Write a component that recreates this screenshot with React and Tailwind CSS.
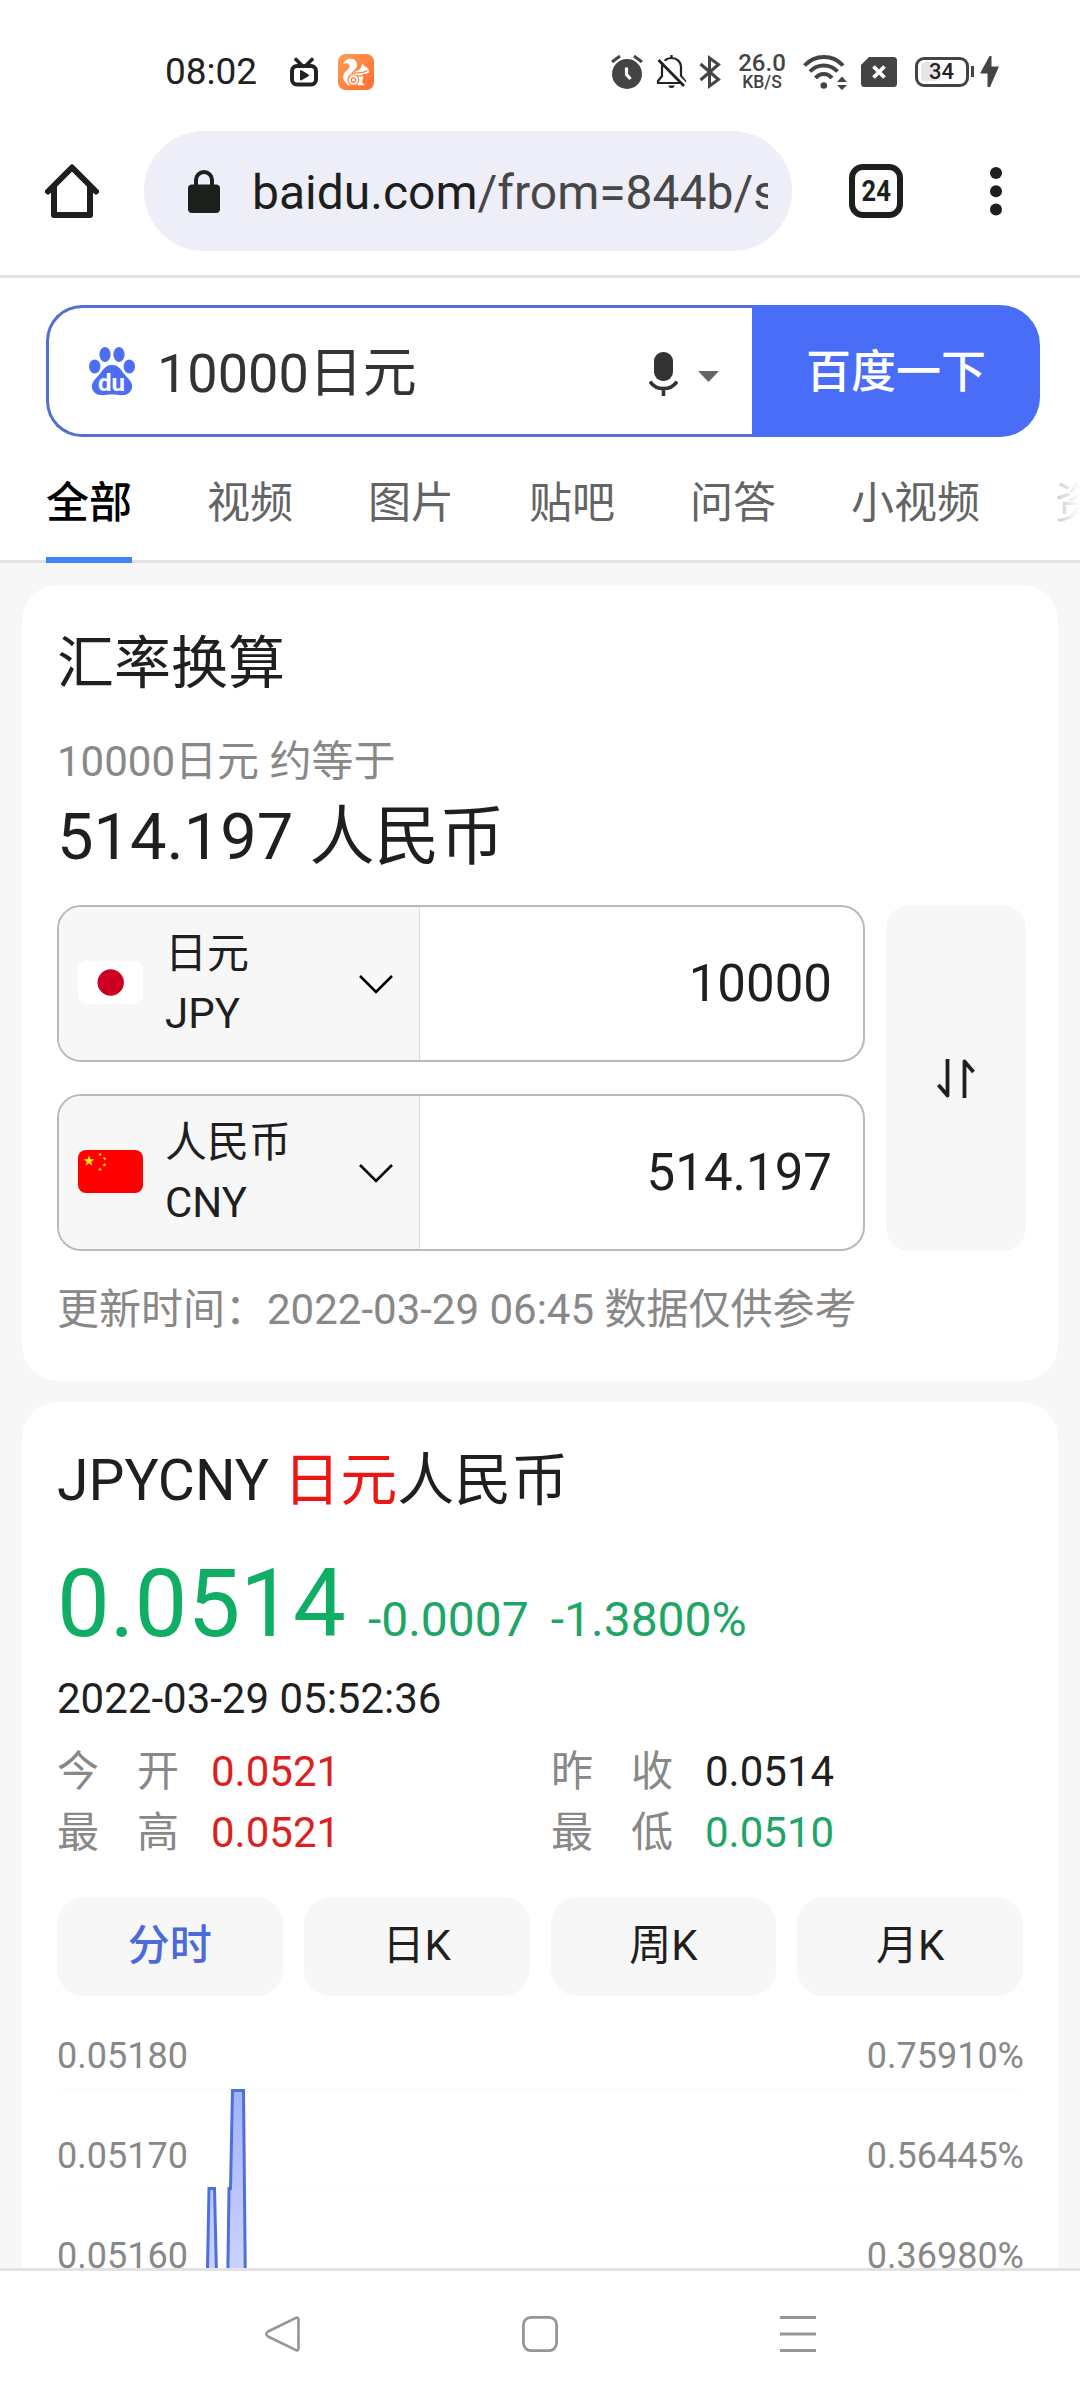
import React, { useState } from "react";

const tabs = ["视频", "图片", "贴吧", "问答", "小视频", "资讯"];

const stats = [
  { label: ["今", "开"], value: "0.0521", color: "text-[#dd1f1f]" },
  { label: ["昨", "收"], value: "0.0514", color: "text-[#1f1f1f]" },
  { label: ["最", "高"], value: "0.0521", color: "text-[#dd1f1f]" },
  { label: ["最", "低"], value: "0.0510", color: "text-[#1fa667]" },
];

const periods = ["分时", "日K", "周K", "月K"];

const axis = [
  ["0.05180", "0.75910%"],
  ["0.05170", "0.56445%"],
  ["0.05160", "0.36980%"],
];

const StatusBar = () => (
  <div className="flex h-[131px] items-center pt-[12px] pl-[165px] pr-[81px] text-[#444]">
    <span className="w-[125px] text-[37px] leading-[40px] text-[#222]">08:02</span>
    {/* tv */}
    <svg className="w-[28px] h-[30px]" viewBox="0 0 28 30" fill="none" stroke="#222" strokeWidth="4">
      <rect x="2" y="9" width="24" height="18.500" rx="5" />
      <path d="M6 2.500l6 6M22 2.500l-6 6" strokeLinecap="round" strokeWidth="3.600" />
      <path d="M11 14v8.500l7-4.200z" fill="#222" strokeWidth="2" strokeLinejoin="round" />
    </svg>
    {/* squirrel */}
    <svg className="ml-[20px] w-[36px] h-[36px]" viewBox="0 0 105 105">
      <defs>
        <linearGradient id="uc" x1="0" y1="0" x2="1" y2="1">
          <stop offset="0" stopColor="#ff9f52" />
          <stop offset="1" stopColor="#ff6a30" />
        </linearGradient>
      </defs>
      <rect width="105" height="105" rx="22" fill="url(#uc)" />
      <path d="M15 30C20 12 46 8 54 24C60 38 50 46 40 54C30 62 25 72 28 88C14 80 11 64 22 51C30 43 36 38 33 31C28 26 22 26 15 30Z" fill="#fff" />
      <path d="M71 27L77 36C86 39 92 47 90 54C86 59 79 58 72 59C76 67 70 77 71 85L77 88V91H27C23 76 32 60 46 53C56 48 62 48 66 41C68 36 70 33 71 27Z" fill="#fff" />
      <circle cx="45" cy="76" r="15.500" fill="none" stroke="#ff8040" strokeWidth="3.500" />
      <circle cx="45" cy="76" r="6.500" fill="none" stroke="#ff8040" strokeWidth="4" />
      <path d="M40 57C54 52 66 60 86 48M56 62C64 67 70 65 76 60" fill="none" stroke="#ff8040" strokeWidth="3.500" />
    </svg>

    {/* alarm */}
    <svg className="ml-auto w-[32px] h-[34px]" viewBox="0 0 32 34">
      <circle cx="16" cy="19" r="15" fill="#444" />
      <path d="M1 7l8-6M31 7l-8-6" stroke="#444" strokeWidth="3" />
      <path d="M15.500 12.500v7l4 4.500" stroke="#fff" strokeWidth="3.200" fill="none" />
    </svg>
    {/* muted bell */}
    <svg className="ml-[13px] w-[31px] h-[33px]" viewBox="0 0 31 33" fill="none" stroke="#222" strokeWidth="2.200">
      <path d="M2 28h27v-2l-4-5v-9c0-5-4-9-9.500-9S6 7 6 12v9l-4 5z" />
      <path d="M15.500 0v3" />
      <path d="M12.500 30.500a3 2.500 0 0 0 6 0z" fill="#222" stroke="none" />
      <path d="M4.500 3.500L29.500 29" stroke="#fff" strokeWidth="3" />
      <path d="M2.500 5L28 31" strokeWidth="2.800" />
    </svg>
    {/* bluetooth */}
    <svg className="ml-[12px] w-[22px] h-[34px]" viewBox="0 0 22 34" fill="none" stroke="#444" strokeWidth="3">
      <path d="M1.500 9L19.500 24.500L10.500 31V3L19.500 9.500L1.500 25" />
    </svg>
    <div className="ml-[16px] w-[50px] text-center font-medium">
      <div className="text-[24px] leading-[20px]">26.0</div>
      <div className="text-[17.500px] leading-[18px]">KB/S</div>
    </div>
    {/* wifi */}
    <svg className="ml-[16px] w-[45px] h-[36px]" viewBox="0 0 45 36" fill="none" stroke="#444" strokeWidth="4">
      <path d="M1.500 11.500C12 0 30 0 40 11.500" />
      <path d="M7 17.500C14.500 9.500 27 9.500 34.500 17.500" />
      <path d="M12.500 24C17 18.500 24.500 18.500 29 24" />
      <circle cx="20.800" cy="31.500" r="3.300" fill="#444" stroke="none" />
      <path d="M34 28l5-5.500 5 5.500zM34 31l5 5 5-5z" fill="#444" stroke="none" />
    </svg>
    {/* sim */}
    <svg className="ml-[13px] w-[36px] h-[30px]" viewBox="0 0 36 30">
      <path d="M8 0h24.500a3.500 3.500 0 0 1 3.500 3.500v23a3.500 3.500 0 0 1-3.500 3.500h-29A3.500 3.500 0 0 1 0 26.500V8z" fill="#444" />
      <path d="M12.500 9.500l11 11M23.500 9.500l-11 11" stroke="#fff" strokeWidth="3.800" />
    </svg>
    {/* battery */}
    <div className="ml-[18px] flex h-[30px] w-[54px] items-center rounded-[9px] border-[3px] border-[#444] p-[3px]">
      <div className="flex h-[19px] w-[16px] rounded-l-[4px] bg-[#e8e4e8] pl-[8px]">
        <span className="text-[22px] leading-[20px] font-medium text-[#222]">34</span>
      </div>
    </div>
    <div className="ml-[2px] h-[11px] w-[3px] bg-[#444]" />
    <svg className="ml-[6px] w-[19px] h-[31px]" viewBox="0 0 19 31">
      <path d="M9.500 0L0 17.500h7.500V31h2.500L19 10.500h-7.500V0z" fill="#444" />
    </svg>
  </div>
);

const BrowserBar = () => (
  <div className="flex h-[147px] border-b-[3px] border-[#e3e3e3] pl-[45px]">
    <svg className="mt-[33px] w-[54px] h-[54px]" viewBox="0 0 54 54" fill="none" stroke="#1d1f1d" strokeWidth="6" strokeLinecap="round" strokeLinejoin="round">
      <path d="M3 27.500L27 3.500L51 27.500" />
      <path d="M9 23v28h36V23" />
    </svg>
    <div className="ml-[45px] flex h-[120px] w-[648px] items-center rounded-full bg-[#eeeef8] pl-[44px] pr-[24px]">
      <svg className="w-[32px] h-[43px]" viewBox="0 0 32 43">
        <rect y="14.500" width="32" height="28.500" rx="4" fill="#1d1f1d" />
        <path d="M8 17v-7a8 8 0 0 1 16 0v7" fill="none" stroke="#1d1f1d" strokeWidth="4" />
      </svg>
      <div className="ml-[32px] flex-1 overflow-hidden whitespace-nowrap pt-[3px] text-[48px] leading-[64px] text-[#474747]">
        <span className="text-[#1d1f1d]">baidu.com</span>/from=844b/s
      </div>
    </div>
    <div className="ml-[57px] mt-[33px] flex h-[54px] w-[54px] items-center justify-center rounded-[14px] border-[6px] border-[#1d1f1d]">
      <span className="scale-x-[0.85] text-[30px] font-bold leading-[40px] text-[#1d1f1d]">24</span>
    </div>
    <svg className="ml-[87px] mt-[36px] w-[12px] h-[49px]" viewBox="0 0 12 49" fill="#1d1f1d">
      <circle cx="6" cy="6" r="6" />
      <circle cx="6" cy="24.200" r="6" />
      <circle cx="6" cy="42.500" r="6" />
    </svg>
  </div>
);

const SearchBox = () => (
  <div className="mr-[40px] ml-[46px] mt-[27px] flex h-[132px]">
    <div className="flex flex-1 items-center rounded-l-[36px] border-[3px] border-r-0 border-[#5470cf] pl-[40px] pr-[33px]">
      <svg className="w-[46px] h-[49px]" viewBox="0 0 46 49" fill="#4b6ef5">
        <ellipse cx="16" cy="7.500" rx="5.600" ry="7.500" />
        <ellipse cx="30" cy="7.500" rx="5.600" ry="7.500" />
        <ellipse cx="5.700" cy="19.500" rx="5.700" ry="7" />
        <ellipse cx="40.300" cy="19.500" rx="5.700" ry="7" />
        <path d="M23 18C31 18 32 24 37 29C42 34 45 38 42 43.500C38 50.500 30 47.500 23 47.500C16 47.500 8 50.500 4 43.500C1 38 4 34 9 29C14 24 15 18 23 18Z" />
        <text x="22.500" y="44" fill="#fff" fontSize="24" fontWeight="700" textAnchor="middle" textLength="27" lengthAdjust="spacingAndGlyphs">du</text>
      </svg>
      <div className="ml-[22px] text-[54px] leading-[80px] pt-[5px] text-[#333]">10000日元</div>
      <svg className="ml-auto mt-[6px] w-[29px] h-[44px]" viewBox="0 0 29 44">
        <rect x="5" width="19" height="29" rx="9" fill="#333" />
        <path d="M1 29.500C7 39 22 39 28 29.500M14.500 36v8" fill="none" stroke="#333" strokeWidth="3.600" />
      </svg>
      <svg className="ml-[20px] mt-[10px] w-[21px] h-[11px]" viewBox="0 0 21 11">
        <path d="M0 0h21L10.500 11z" fill="#666" />
      </svg>
    </div>
    <button className="w-[288px] rounded-r-[40px] bg-[#4a6df7] pt-[4px] text-[45px] font-medium leading-[60px] text-white">百度一下</button>
  </div>
);

const Tabs = () => (
  <div className="relative flex h-[126px] gap-[75px] whitespace-nowrap border-b-[3px] border-[#e4e4e4] pl-[46px] text-[43px] leading-[60px] text-[#646464]">
    <div className="-mb-[3px] h-[126px] shrink-0 border-b-[6px] border-[#3b87f2] pt-[36px] font-medium text-black">全部</div>
    {tabs.map((tab) => (
      <div key={tab} className="shrink-0 pt-[36px]">{tab}</div>
    ))}
    <div className="absolute right-0 top-0 h-[120px] w-[50px] bg-gradient-to-r from-white/30 to-white" />
  </div>
);

const JapanFlag = () => (
  <svg className="mb-[2px] w-[65px] h-[43px]" viewBox="0 0 65 43">
    <rect width="65" height="43" rx="8" fill="#fff" />
    <circle cx="32.700" cy="21.500" r="13.200" fill="#cc0022" />
  </svg>
);

const Star = ({ x, y, r, turn = 0 }) => (
  <path
    d="M0-10L2.250-3.090H9.510L3.630 1.180L5.880 8.090L0 3.820L-5.880 8.090L-3.630 1.180L-9.510-3.090H-2.250Z"
    transform={`translate(${x} ${y}) rotate(${turn}) scale(${r / 10})`}
    fill="#ffee00"
  />
);

const ChinaFlag = () => (
  <svg className="mb-[2px] w-[65px] h-[43px]" viewBox="0 0 65 43">
    <rect width="65" height="43" rx="8" fill="#fe0000" />
    <Star x={11} y={11} r={5.800} />
    <Star x={22} y={4.500} r={2.200} turn={25} />
    <Star x={26.500} y={8.500} r={2.200} turn={45} />
    <Star x={26.500} y={15} r={2.200} />
    <Star x={22} y={19.500} r={2.200} turn={20} />
  </svg>
);

const CurrencyRow = ({ flag, name, code, amount }) => (
  <div className="flex h-[157px] overflow-hidden rounded-[24px] border-2 border-[#b9b9b9]">
    <div className="flex w-[361px] items-center border-r border-[#dcdcdc] bg-[#f7f7f7] pl-[19px] pr-[26px]">
      {flag}
      <div className="ml-[22px] text-[42px] leading-[60px] text-[#1f1f1f]">
        <div>{name}</div>
        <div>{code}</div>
      </div>
      <svg className="ml-auto mt-[2px] w-[34px] h-[19px]" viewBox="0 0 34 19">
        <path d="M1 1L17 17L33 1" fill="none" stroke="#000" strokeWidth="2.600" />
      </svg>
    </div>
    <div className="flex-1 self-center pr-[31px] text-right text-[51px] leading-[60px] text-[#1f1f1f]">{amount}</div>
  </div>
);

const Converter = () => (
  <div className="rounded-[36px] bg-white px-[35px] pt-[39px] pb-[41px]">
    <h2 className="text-[57px] leading-[80px] text-[#1f1f1f]">汇率换算</h2>
    <p className="mt-[28px] text-[42px] leading-[60px] text-[#888]">10000日元 约等于</p>
    <p className="mt-[3px] text-[65px] leading-[84px] text-[#1f1f1f]">514.197 人民币</p>
    <div className="mt-[26px] flex gap-[21px]">
      <div className="flex w-[808px] shrink-0 flex-col gap-[32px]">
        <CurrencyRow flag={<JapanFlag />} name="日元" code="JPY" amount="10000" />
        <CurrencyRow flag={<ChinaFlag />} name="人民币" code="CNY" amount="514.197" />
      </div>
      <button className="flex w-[140px] shrink-0 items-center justify-center rounded-[24px] bg-[#f7f7f7]">
        <svg className="w-[38px] h-[39px]" viewBox="0 0 38 39" fill="none" stroke="#1f1f1f" strokeWidth="3.800" strokeLinejoin="round">
          <path d="M10.500 0V36.500L1.500 26" />
          <path d="M27.500 39V2.500L36.500 13" />
        </svg>
      </button>
    </div>
    <p className="mt-[29px] text-[42px] leading-[60px] text-[#888]">更新时间：2022-03-29 06:45 数据仅供参考</p>
  </div>
);

const Chart = () => (
  <div className="relative pt-[40px]">
    <svg className="absolute left-0 top-0 w-[966px] h-[300px]" viewBox="0 0 966 300">
      <defs>
        <linearGradient id="area" gradientUnits="userSpaceOnUse" x1="0" y1="93" x2="0" y2="300">
          <stop offset="0" stopColor="#a3b3fa" />
          <stop offset="1" stopColor="#cfd7fe" />
        </linearGradient>
      </defs>
      <path d="M0 94H966M0 193.500H966" stroke="#fcfcfc" strokeWidth="2" />
      <path
        d="M150 300L152 192.500H157.500L160 300ZM170.500 300L172 192.500H173.500L175.500 94.500H186.500L188.500 300Z"
        fill="url(#area)"
        stroke="#4f70d9"
        strokeWidth="3"
      />
    </svg>
    {axis.map(([price, percent]) => (
      <div key={price} className="mb-[60px] -mr-[1px] flex justify-between text-[36px] leading-[40px] text-[#888]">
        <span>{price}</span>
        <span>{percent}</span>
      </div>
    ))}
  </div>
);

const Quote = () => {
  const [period, setPeriod] = useState("分时");

  return (
    <div className="mt-[21px] rounded-t-[36px] bg-white px-[35px] pt-[39px]">
      <h2 className="text-[57px] leading-[80px] text-[#1f1f1f]">
        JPYCNY <span className="text-[#ee1515]">日元</span>人民币
      </h2>
      <div className="mt-[33px] flex h-[100px] items-baseline text-[#1fa667]">
        <span className="text-[94px] leading-[100px] text-[#10ad64]">0.0514</span>
        <span className="ml-[22px] text-[48px] leading-[60px]">-0.0007</span>
        <span className="ml-[22px] text-[48px] leading-[60px]">-1.3800%</span>
      </div>
      <p className="mt-[15px] text-[42px] leading-[60px] text-[#1f1f1f]">2022-03-29 05:52:36</p>
      <div className="mt-[12px] grid grid-cols-[494px_1fr] text-[42px] leading-[61px]">
        {stats.map((item) => (
          <div key={item.label.join("")} className="flex">
            <div className="flex w-[122px] justify-between text-[#888]">
              <span>{item.label[0]}</span>
              <span>{item.label[1]}</span>
            </div>
            <span className={`ml-[32px] ${item.color}`}>{item.value}</span>
          </div>
        ))}
      </div>
      <div className="mt-[34px] grid grid-cols-4 gap-[21px]">
        {periods.map((name) => (
          <button
            key={name}
            className={`h-[99px] rounded-[27px] bg-[#f7f7f7] pb-[2px] text-[42px] leading-[60px] ${
              name === period ? "font-medium text-[#4b6bdc]" : "text-[#1f1f1f]"
            }`}
            onClick={() => setPeriod(name)}
          >
            {name}
          </button>
        ))}
      </div>
      <Chart />
    </div>
  );
};

const NavBar = () => (
  <div className="flex h-[132px] items-start justify-center gap-[222px] border-t-[3px] border-[#e3e3e3] bg-white pt-[45px]">
    <svg className="w-[36px] h-[36px]" viewBox="0 0 36 36" fill="none" stroke="#969696" strokeWidth="2.600" strokeLinejoin="round">
      <path d="M32 1.800L4 15.500Q0.500 18 4 20.500L32 34.200Q34.500 35 34.500 32V4Q34.500 1 32 1.800Z" />
    </svg>
    <svg className="w-[36px] h-[36px]" viewBox="0 0 36 36" fill="none" stroke="#969696" strokeWidth="2.800">
      <rect x="1.400" y="1.400" width="33.200" height="33.200" rx="7.500" />
    </svg>
    <svg className="w-[36px] h-[36px]" viewBox="0 0 36 36" stroke="#969696" strokeWidth="3">
      <path d="M0 1.500H36M0 18H36M0 34.500H36" />
    </svg>
  </div>
);

const App = () => {
  return (
    <div className="h-[2400px] w-[1080px] overflow-hidden bg-white font-['Roboto','Noto_Sans_CJK_SC',sans-serif]">
      <StatusBar />
      <BrowserBar />
      <SearchBox />
      <Tabs />
      <main className="h-[1705px] overflow-hidden bg-[#f7f7f7] px-[22px] pt-[22px]">
        <Converter />
        <Quote />
      </main>
      <NavBar />
    </div>
  );
};

export default App;
